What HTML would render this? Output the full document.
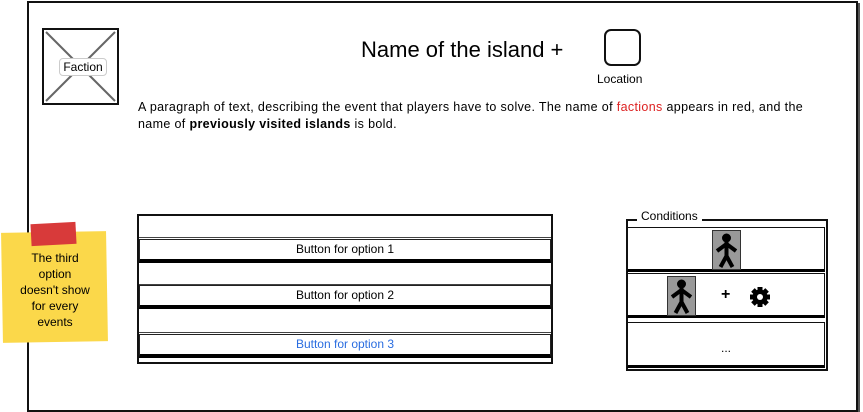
<html><head><style>
body{margin:0;width:863px;height:412px;background:#fff;position:relative;font-family:"Liberation Sans",sans-serif;overflow:hidden}
.a{position:absolute}
.frame{left:27px;top:1px;width:827px;height:407px;border:2px solid #111;box-shadow:2px 2px 0 #555}
.btn{position:absolute;left:139px;width:410px;height:19px;border:1px solid #222;border-bottom:4px solid #000;text-align:center;font-size:12px;line-height:19px}
.row{position:absolute;left:627px;width:196px;border:1px solid #111;border-bottom:3px solid #000}
.fig{position:absolute;width:27px;height:38px;background:#999;border:1px solid #333}
</style></head><body>
<div class="a frame"></div>
<div class="a" style="left:42px;top:28px;width:73px;height:73px;border:2px solid #111">
<svg width="73" height="73" style="position:absolute;left:0;top:0"><line x1="2" y1="2" x2="71" y2="71" stroke="#666" stroke-width="2"/><line x1="71" y1="2" x2="2" y2="71" stroke="#666" stroke-width="2"/></svg>
<div class="a" style="left:15px;top:28px;width:46px;height:16px;background:#fff;border:1px solid #ccc;border-radius:4px;font-size:12px;text-align:center;line-height:16px">Faction</div>
</div>
<div class="a" style="left:361px;top:37px;font-size:22px">Name of the island +</div>
<div class="a" style="left:604px;top:29px;width:33px;height:33px;border:2.5px solid #111;border-radius:7px"></div>
<div class="a" style="left:597px;top:72px;font-size:12px">Location</div>
<div class="a" style="left:138px;top:99px;font-size:12.5px;letter-spacing:0.35px;line-height:17px;width:720px;white-space:nowrap">A paragraph of text, describing the event that players have to solve. The name of <span style="color:#d22">factions</span> appears in red, and the<br>name of <b>previously visited islands</b> is bold.</div>
<div class="a" style="left:137px;top:214px;width:412px;height:146px;border:2px solid #111"></div>
<div class="a" style="left:139px;top:237px;width:412px;height:1px;background:#444"></div>
<div class="btn" style="top:239px">Button for option 1</div>
<div class="a" style="left:139px;top:284px;width:412px;height:1px;background:#444"></div>
<div class="btn" style="top:285px">Button for option 2</div>
<div class="a" style="left:139px;top:332px;width:412px;height:1px;background:#444"></div>
<div class="btn" style="top:334px;color:#2a6de0">Button for option 3</div>
<div class="a" style="left:626px;top:219px;width:198px;height:148px;border:2px solid #111;border-top:2px solid #111"></div>
<div class="a" style="left:637px;top:209px;font-size:12px;background:#fff;padding:0 4px">Conditions</div>
<div class="row" style="top:227px;height:41px"></div>
<div class="fig" style="left:712px;top:230px"><svg width="27" height="38"><circle cx="13.5" cy="7" r="4.5"/><path d="M13.5 11v15M4 20l9.5-7 9.5 7M13.5 25l-6 11M13.5 25l6 11" stroke="#000" stroke-width="4" fill="none"/></svg></div>
<div class="row" style="top:273px;height:41px"></div>
<div class="fig" style="left:667px;top:276px"><svg width="27" height="38"><circle cx="13.5" cy="7" r="4.5"/><path d="M13.5 11v15M4 20l9.5-7 9.5 7M13.5 25l-6 11M13.5 25l6 11" stroke="#000" stroke-width="4" fill="none"/></svg></div>
<div class="a" style="left:721px;top:286px;font-size:16px;font-weight:bold">+</div>
<svg class="a" style="left:749px;top:286px" width="22" height="22" viewBox="0 0 22 22"><g transform="translate(11 11)"><g fill="#000"><rect x="-2.5" y="-10" width="5" height="20"/><rect x="-2.5" y="-10" width="5" height="20" transform="rotate(45)"/><rect x="-2.5" y="-10" width="5" height="20" transform="rotate(90)"/><rect x="-2.5" y="-10" width="5" height="20" transform="rotate(135)"/><circle r="7.5"/></g><circle r="3" fill="#fff"/></g></svg>
<div class="row" style="top:322px;height:42px;text-align:center;font-size:12px;line-height:50px">...</div>
<div class="a" style="left:2px;top:232px;width:105px;height:110px;background:#fbd84a;transform:rotate(-1deg)"></div>
<div class="a" style="left:31px;top:223px;width:45px;height:22px;background:#d83a3a;transform:rotate(-3deg)"></div>
<div class="a" style="left:10px;top:250px;width:90px;text-align:center;font-size:12px;line-height:16px">The third<br>option<br>doesn't show<br>for every<br>events</div>
</body></html>
